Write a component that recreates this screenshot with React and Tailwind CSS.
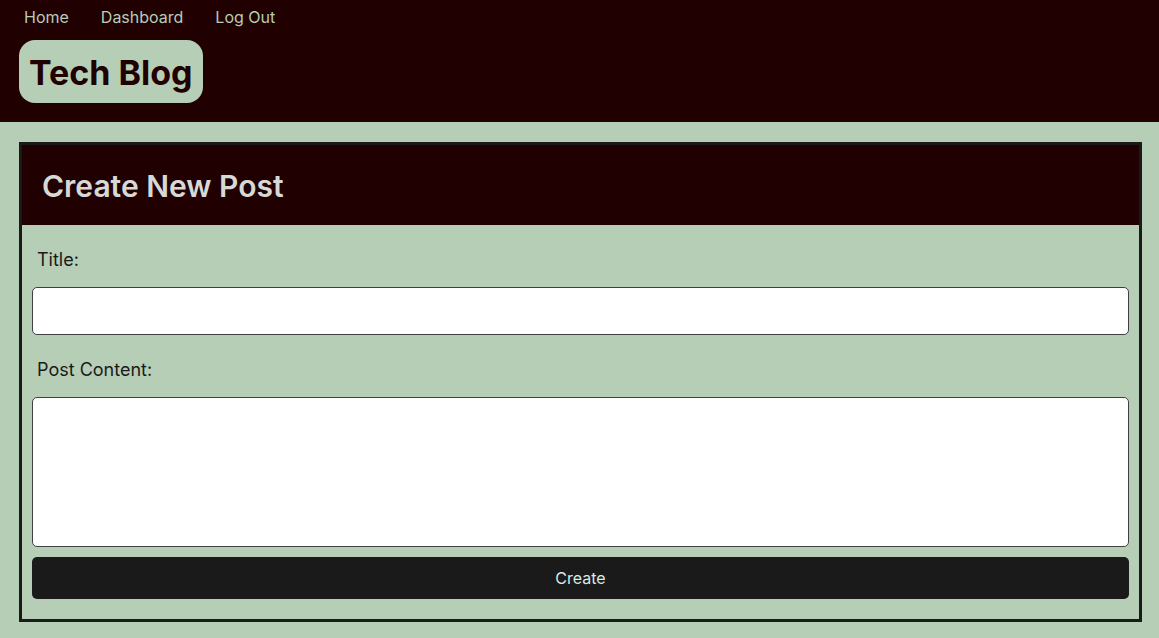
export default function App() {
  return (
    <div className="min-h-screen bg-[#b6ceb6] font-['Inter','Liberation_Sans',sans-serif] text-[#1a1a1a]">
      <header className="bg-[#210002] px-[19px] pt-[5px] pb-[19px]">
        <nav className="flex gap-8 px-[5px] text-[16px] leading-6 text-[#b6ceb6]">
          <a href="#home">Home</a>
          <a href="#dashboard">Dashboard</a>
          <a href="#logout">Log Out</a>
        </nav>
        <h1 className="mt-[11px] w-fit rounded-2xl bg-[#b6ceb6] px-[10px] pt-[10px] pb-2 text-[34px] leading-[45px] font-bold text-[#210002]">
          Tech Blog
        </h1>
      </header>
      <main className="pt-5 pr-[17px] pb-4 pl-[19px]">
        <section className="border-3 border-[#1a1a1a]">
          <h2 className="bg-[#210002] px-5 pt-[21px] pb-[19px] text-[30px] leading-10 font-semibold text-[#d6d9d6]">
            Create New Post
          </h2>
          <form className="flex flex-col px-[10px] pt-[21px] pb-5">
            <label htmlFor="title" className="px-[5px] text-[18px] leading-7">
              Title:
            </label>
            <input
              id="title"
              type="text"
              className="mt-[13px] h-12 rounded-[5px] border border-[#404040] bg-white px-2"
            />
            <label htmlFor="content" className="mt-[21px] px-[5px] text-[18px] leading-7">
              Post Content:
            </label>
            <textarea
              id="content"
              className="mt-[13px] h-[150px] resize-none rounded-[5px] border border-[#404040] bg-white p-2"
            />
            <button
              type="submit"
              className="mt-[10px] h-[42px] rounded-[5px] bg-[#1a1a1a] text-[16px] text-[#d9e8e8]"
            >
              Create
            </button>
          </form>
        </section>
      </main>
    </div>
  );
}
